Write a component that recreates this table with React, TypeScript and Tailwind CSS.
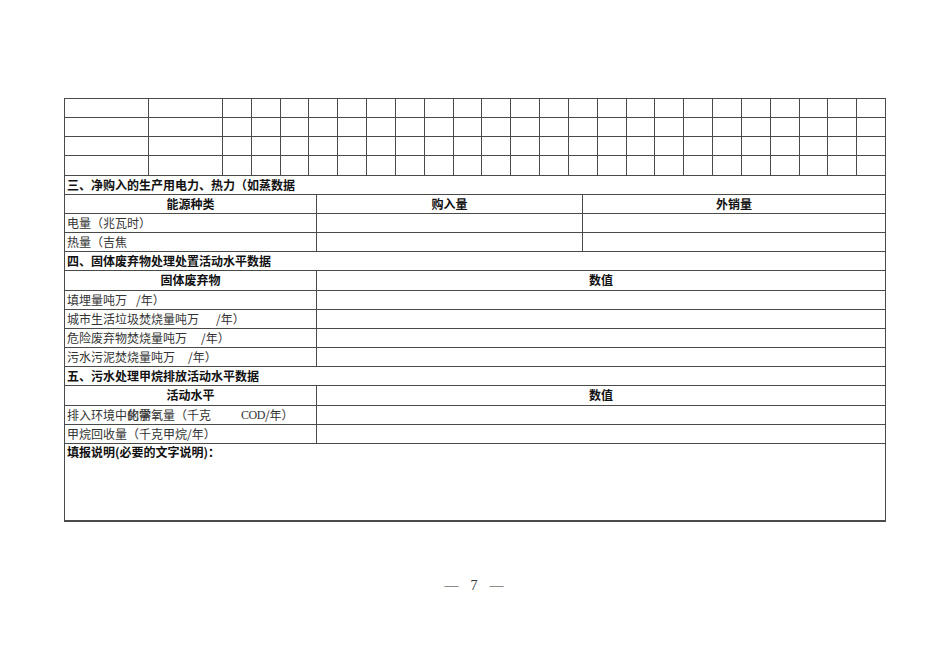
import React from "react";

const line = "border-[#4a4a4a]";
const rowH = "h-[19.17px]";

function GridRows() {
  const rows = [0, 1, 2, 3];
  const cells = Array.from({ length: 25 });
  return (
    <div className="grid grid-cols-[84px_74px_repeat(23,1fr)]">
      {rows.map((r) =>
        cells.map((_, c) => (
          <div key={`${r}-${c}`} className={`${rowH} border-r border-b ${line}`} />
        ))
      )}
    </div>
  );
}

function Section({ title }: { title: string }) {
  return (
    <div className={`${rowH} border-r border-b ${line} flex items-center pl-[2px] text-[12px] font-bold text-[#111] leading-none`}>
      {title}
    </div>
  );
}

function Cell({
  children,
  center,
  bold,
}: {
  children?: React.ReactNode;
  center?: boolean;
  bold?: boolean;
}) {
  return (
    <div
      className={`${rowH} border-r border-b ${line} flex items-center text-[12px] leading-none whitespace-pre ${
        center ? "justify-center" : "pl-[2px]"
      } ${bold ? "font-bold text-[#111]" : "font-normal text-[#333]"}`}
    >
      {children}
    </div>
  );
}

export default function App() {
  return (
    <div
      className="w-[950px] h-[672px] bg-white overflow-hidden"
      style={{ fontFamily: '"Noto Sans CJK SC", "Noto Sans", sans-serif' }}
    >
      <div className="pt-[98px] pl-[64px]">
        <div className={`w-[822px] border-l border-t ${line}`}>
          <GridRows />

          <Section title="三、净购入的生产用电力、热力（如蒸数据" />
          <div className="grid grid-cols-[252px_266px_1fr]">
            <Cell center bold>能源种类</Cell>
            <Cell center bold>购入量</Cell>
            <Cell center bold>外销量</Cell>
            <Cell>电量（兆瓦时）</Cell>
            <Cell />
            <Cell />
            <Cell>热量（吉焦</Cell>
            <Cell />
            <Cell />
          </div>

          <Section title="四、固体废弃物处理处置活动水平数据" />
          <div className="grid grid-cols-[252px_1fr]">
            <Cell center bold>固体废弃物</Cell>
            <Cell center bold>数值</Cell>
            <Cell>
              填埋量吨万<span className="ml-[9px]">/年）</span>
            </Cell>
            <Cell />
            <Cell>
              城市生活垃圾焚烧量吨万<span className="ml-[17px]">/年）</span>
            </Cell>
            <Cell />
            <Cell>
              危险废弃物焚烧量吨万<span className="ml-[14px]">/年）</span>
            </Cell>
            <Cell />
            <Cell>
              污水污泥焚烧量吨万<span className="ml-[13px]">/年）</span>
            </Cell>
            <Cell />
          </div>

          <Section title="五、污水处理甲烷排放活动水平数据" />
          <div className="grid grid-cols-[252px_1fr]">
            <Cell center bold>活动水平</Cell>
            <Cell center bold>数值</Cell>
            <Cell>
              排入环境中
              <span className="relative">
                的<span className="absolute left-0 top-0">化</span>
              </span>
              <span className="relative">
                学<span className="absolute left-0 top-0">需</span>
              </span>
              氧量（千克
              <span className="ml-[30px] tracking-[-0.5px]" style={{ fontFamily: '"Liberation Serif", serif' }}>COD</span>
              /年）
            </Cell>
            <Cell />
            <Cell>甲烷回收量（千克甲烷/年）</Cell>
            <Cell />
          </div>

          <div className={`h-[78px] border-r border-b-2 ${line} pl-[2px] pt-[1px] text-[12px] font-bold text-[#111] leading-[14px]`}>
            填报说明(必要的文字说明)：
          </div>
        </div>
      </div>

      <div
        className="mt-[53px] flex justify-center items-center gap-[12px] text-[14px] text-[#333] pr-[2px]"
        style={{ fontFamily: '"Liberation Serif", serif' }}
      >
        <span>—</span>
        <span>7</span>
        <span>—</span>
      </div>
    </div>
  );
}
